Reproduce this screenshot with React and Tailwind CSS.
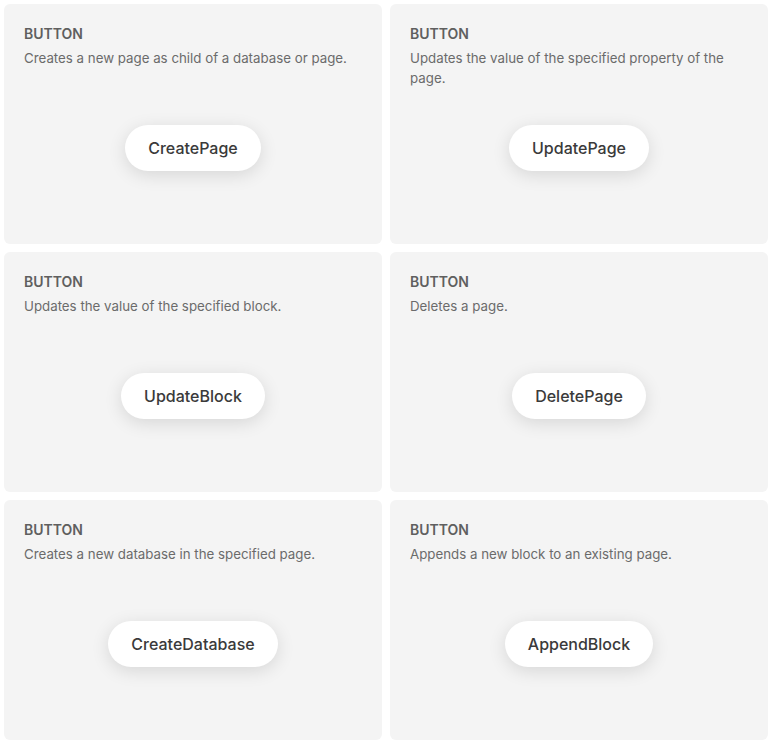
const items = [
  { name: "CreatePage", desc: "Creates a new page as child of a database or page." },
  { name: "UpdatePage", desc: "Updates the value of the specified property of the page." },
  { name: "UpdateBlock", desc: "Updates the value of the specified block." },
  { name: "DeletePage", desc: "Deletes a page." },
  { name: "CreateDatabase", desc: "Creates a new database in the specified page." },
  { name: "AppendBlock", desc: "Appends a new block to an existing page." },
];

function Card({ name, desc }) {
  return (
    <div className="flex h-[240px] flex-col rounded-md bg-[#f4f4f4] px-5 pt-5">
      <div className="min-h-[64px]">
        <div className="text-[14px] font-semibold leading-5 text-[#5f5f5f]">BUTTON</div>
        <p className="mt-1 text-[13.3px] leading-5 text-[#6b6b6b]">{desc}</p>
      </div>
      <div className="mt-[37px] flex justify-center">
        <button className="h-[46px] rounded-full bg-white px-[23px] text-[16px] font-medium text-[#3a3a3a] shadow-[0_4px_18px_rgba(0,0,0,0.12)]">
          {name}
        </button>
      </div>
    </div>
  );
}

export default function App() {
  return (
    <div
      className="min-h-[745px] w-[773px] bg-white pb-[5px] pl-[4px] pr-[5px] pt-[4px]"
      style={{ fontFamily: "Inter, 'Noto Sans', sans-serif" }}
    >
      <div className="grid grid-cols-2 gap-2">
        {items.map((it) => (
          <Card key={it.name} {...it} />
        ))}
      </div>
    </div>
  );
}
